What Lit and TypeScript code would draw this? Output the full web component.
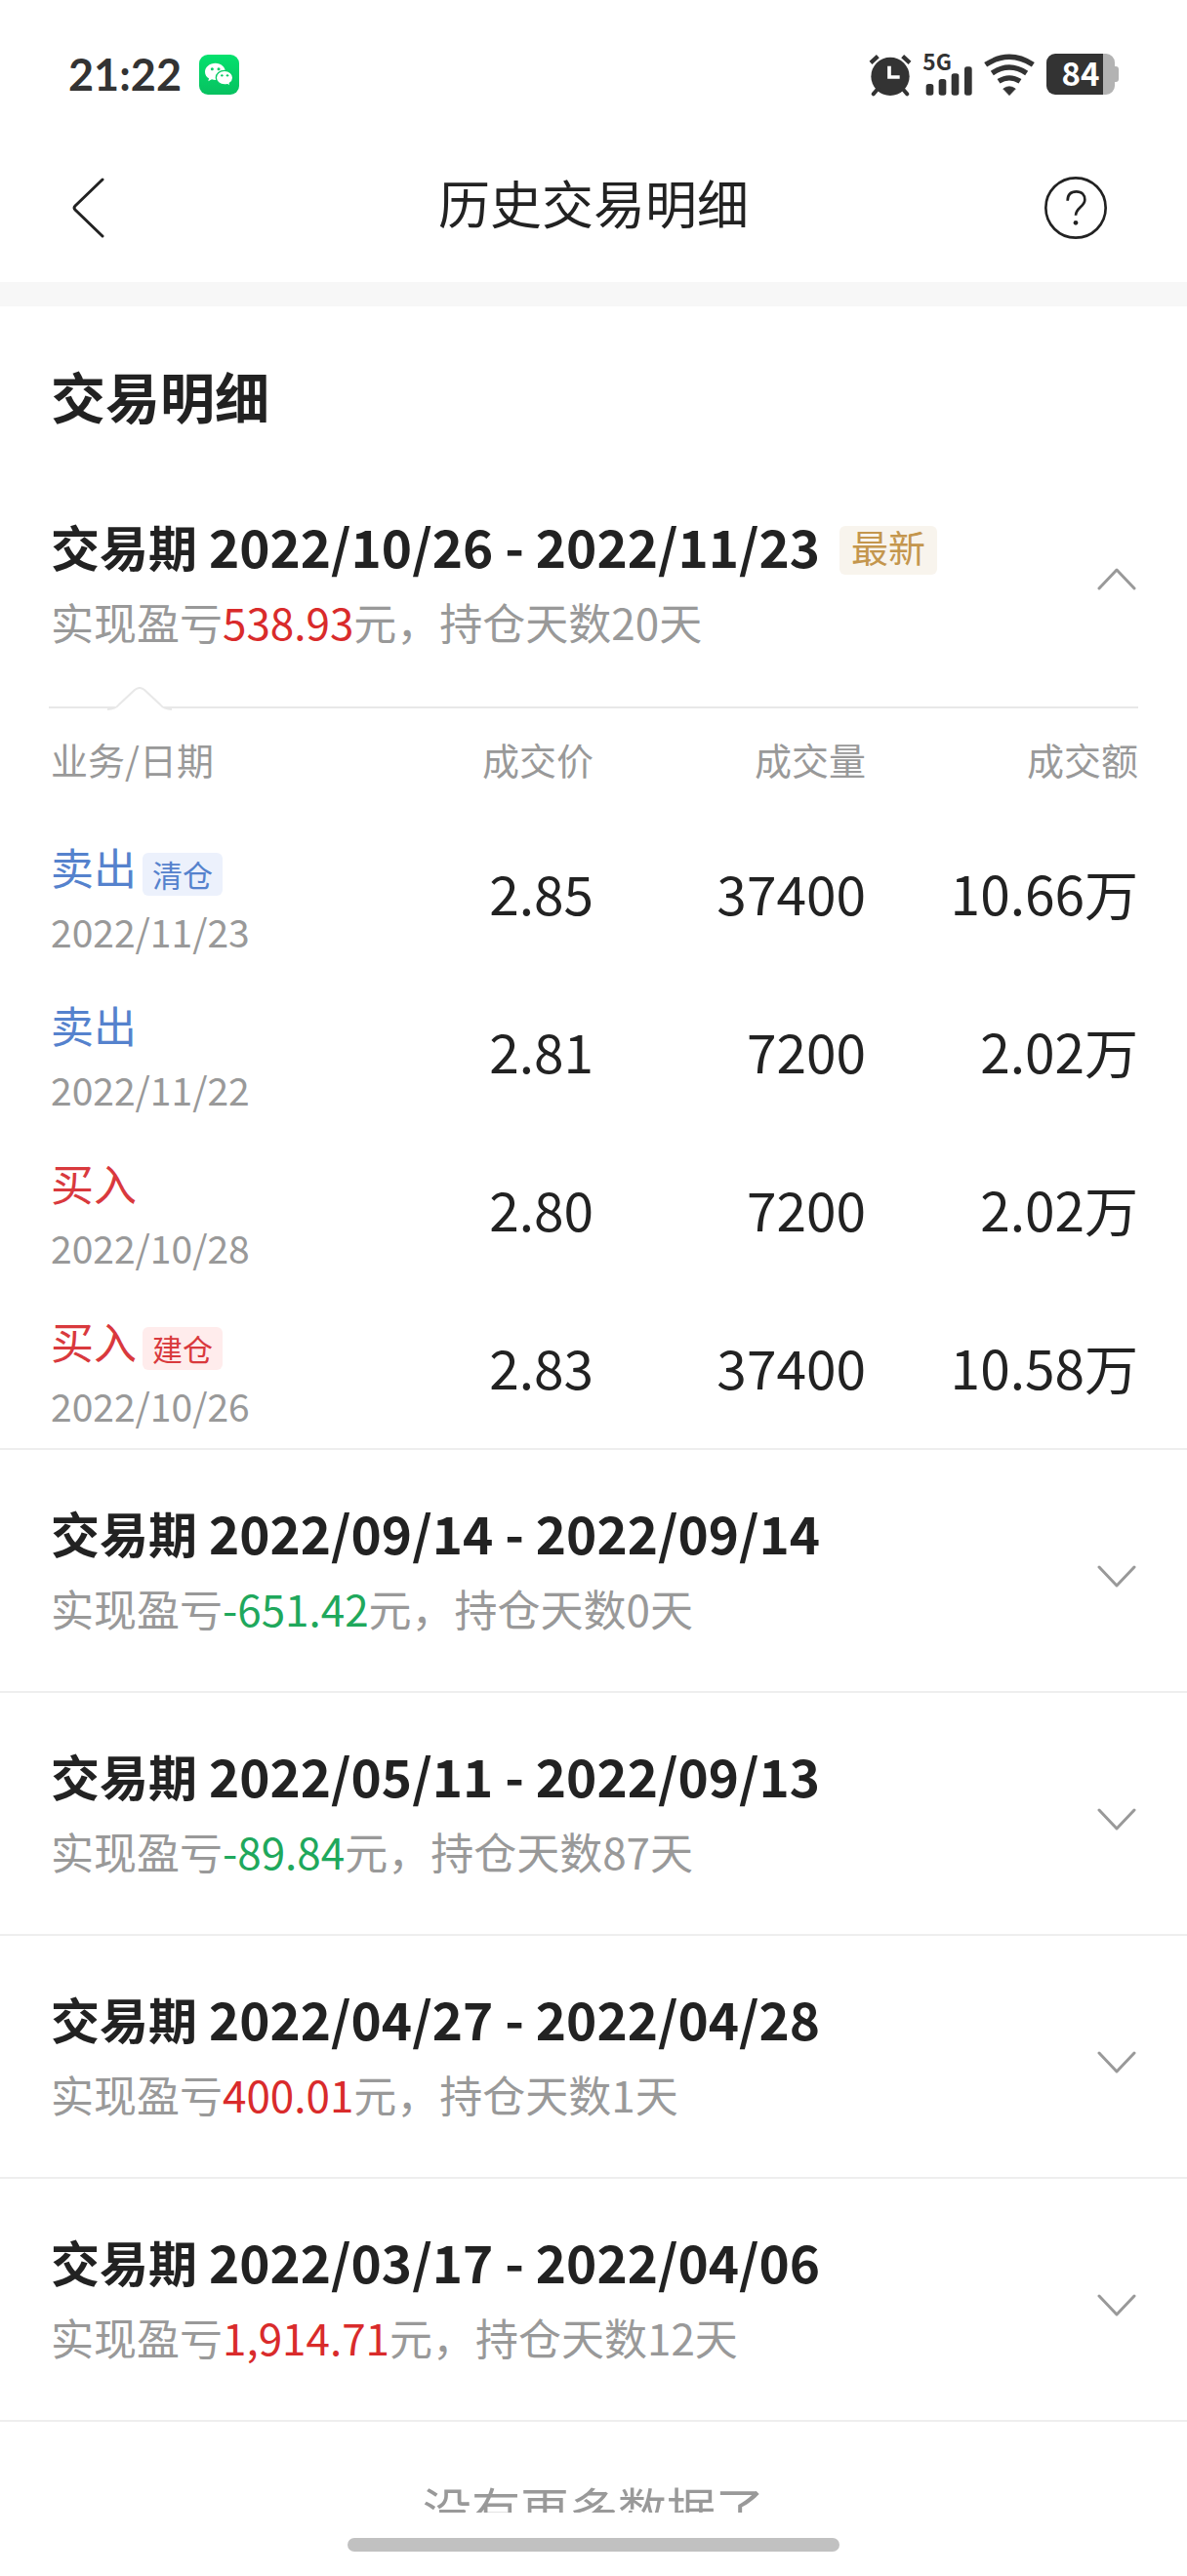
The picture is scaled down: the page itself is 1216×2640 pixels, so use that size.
import { LitElement, html, css, svg, nothing } from "lit";
import { customElement, property, state } from "lit/decorators.js";
import { classMap } from "lit/directives/class-map.js";

interface Trade {
  side: "buy" | "sell";
  tag?: string;
  date: string;
  price: string;
  volume: string;
  amount: string;
}

interface Period {
  range: string;
  profit: string;
  days: number;
  latest?: boolean;
  trades: Trade[];
}

const PERIODS: Period[] = [
  {
    range: "2022/10/26 - 2022/11/23",
    profit: "538.93",
    days: 20,
    latest: true,
    trades: [
      { side: "sell", tag: "清仓", date: "2022/11/23", price: "2.85", volume: "37400", amount: "10.66万" },
      { side: "sell", date: "2022/11/22", price: "2.81", volume: "7200", amount: "2.02万" },
      { side: "buy", date: "2022/10/28", price: "2.80", volume: "7200", amount: "2.02万" },
      { side: "buy", tag: "建仓", date: "2022/10/26", price: "2.83", volume: "37400", amount: "10.58万" },
    ],
  },
  { range: "2022/09/14 - 2022/09/14", profit: "-651.42", days: 0, trades: [] },
  { range: "2022/05/11 - 2022/09/13", profit: "-89.84", days: 87, trades: [] },
  { range: "2022/04/27 - 2022/04/28", profit: "400.01", days: 1, trades: [] },
  { range: "2022/03/17 - 2022/04/06", profit: "1,914.71", days: 12, trades: [] },
];

@customElement("status-bar")
export class StatusBar extends LitElement {
  static styles = css`
    :host {
      display: flex;
      align-items: center;
      justify-content: space-between;
      box-sizing: border-box;
      height: 137px;
      padding: 15px 70px 0;
      color: #333;
    }
    .group {
      display: flex;
      align-items: center;
      gap: 12px;
    }
    .left {
      gap: 18px;
    }
    .time {
      font: 700 45px/56px Lato, "Noto Sans CJK SC", sans-serif;
    }
    svg {
      display: block;
      overflow: visible;
    }
    .network,
    .level {
      font-family: "Noto Sans CJK SC", sans-serif;
      font-weight: 700;
    }
  `;

  render() {
    return html`
      <div class="group left">
        <span class="time">21:22</span>
        <svg width="41" height="41" viewBox="0 0 123 123" role="img" aria-label="微信">
          <defs>
            <linearGradient id="g" x1="0" y1="0" x2="0" y2="1">
              <stop offset="0" stop-color="#04e16d" />
              <stop offset="1" stop-color="#07c160" />
            </linearGradient>
          </defs>
          <rect width="123" height="123" rx="27" fill="url(#g)" />
          <path d="M50 26c-18 0-32 12-32 27 0 9 5 16 12 20l-2 9 11-6c3 1 7 2 11 2 18 0 31-11 31-25S67 26 50 26z" fill="#fff" />
          <circle cx="40" cy="44" r="4.5" fill="#06cf66" />
          <circle cx="60" cy="44" r="4.5" fill="#06cf66" />
          <path d="M78 49c-15 0-26 10-26 22s11 22 26 22c3 0 6 0 9-1l9 4-2-8c6-4 10-10 10-17 0-12-11-22-26-22z" fill="#fff" stroke="#06cb64" stroke-width="4" />
          <circle cx="70" cy="64" r="3.6" fill="#06cb64" />
          <circle cx="87" cy="64" r="3.6" fill="#06cb64" />
        </svg>
      </div>
      <div class="group">
        <svg width="44" height="43" viewBox="0 0 132 129" role="img" aria-label="闹钟">
          <circle cx="66" cy="70" r="59" fill="#333" />
          <path d="M63 38v34h32" fill="none" stroke="#fff" stroke-width="11" />
          <path d="M6 28L28 8M104 8l22 20" stroke="#333" stroke-width="13" />
          <path d="M14 124l14-16M118 124l-14-16" stroke="#333" stroke-width="12" stroke-linecap="round" />
        </svg>
        <svg width="50" height="43" viewBox="0 0 150 129" role="img" aria-label="5G 信号">
          <text class="network" x="-2" y="52" font-size="68" fill="#333">5G</text>
          <rect x="8" y="93" width="23" height="35" rx="8" fill="#333" />
          <rect x="47" y="78" width="23" height="50" rx="8" fill="#333" />
          <rect x="86" y="61" width="23" height="67" rx="8" fill="#333" />
          <rect x="126" y="40" width="23" height="88" rx="8" fill="#333" />
        </svg>
        <svg width="52" height="43" viewBox="0 0 156 129" role="img" aria-label="无线网络">
          <g fill="none" stroke="#333" stroke-width="16">
            <path d="M5 34Q78 -14 151 34" />
            <path d="M25 60Q78 24 131 60" />
            <path d="M45 85Q78 64 111 85" />
          </g>
          <path d="M78 128L59 108Q78 94 97 108z" fill="#333" stroke="#333" stroke-width="2" stroke-linejoin="round" />
        </svg>
        <svg width="74" height="42" viewBox="0 0 74 42" role="img" aria-label="电量 84">
          <path d="M57 0h4a9 9 0 0 1 9 9v4h1a3 3 0 0 1 3 3v10a3 3 0 0 1-3 3h-1v4a9 9 0 0 1-9 9h-4z" fill="#b3b3b3" />
          <path d="M9 0h49v42H9a9 9 0 0 1-9-9V9a9 9 0 0 1 9-9z" fill="#333" />
          <text class="level" x="35" y="33" font-size="33" text-anchor="middle" fill="#fff">84</text>
        </svg>
      </div>
    `;
  }
}

@customElement("trade-table")
export class TradeTable extends LitElement {
  @property({ attribute: false }) trades: Trade[] = [];

  static styles = css`
    :host {
      display: block;
      position: relative;
      margin: 0 50px;
      border-top: 2px solid #e8e8e8;
    }
    .notch {
      position: absolute;
      left: 60px;
      top: -22px;
      display: block;
    }
    table {
      width: 100%;
      table-layout: fixed;
      border-collapse: collapse;
    }
    th,
    td {
      box-sizing: border-box;
      width: 25%;
      padding: 0 0 6px;
      text-align: right;
      vertical-align: middle;
      font-weight: 400;
      white-space: nowrap;
    }
    th {
      height: 110px;
      color: #999;
      font-size: 38px;
      line-height: 56px;
    }
    td {
      height: 162px;
      color: #222;
      font-size: 55px;
      line-height: 72px;
    }
    .kind {
      padding-left: 2px;
      text-align: left;
    }
    td.kind {
      padding-top: 2px;
      padding-bottom: 0;
    }
    .side {
      display: flex;
      align-items: flex-end;
      gap: 6px;
      font-size: 44px;
      line-height: 60px;
    }
    .sell {
      color: #5582cd;
    }
    .buy {
      color: #d9393d;
    }
    .tag {
      padding: 0 10px;
      border-radius: 6px;
      font-size: 31px;
      line-height: 44px;
    }
    .sell .tag {
      background: #ecf1fc;
    }
    .buy .tag {
      background: #ffecec;
    }
    .date {
      display: block;
      margin-top: 11px;
      color: #999;
      font-size: 39px;
      line-height: 50px;
    }
  `;

  render() {
    return html`
      <svg class="notch" width="66" height="24" viewBox="0 0 66 24" aria-hidden="true">
        <path d="M0 23Q8 23 12 18L28 3Q33 -1 38 3L54 18Q58 23 66 23V24H0z" fill="#fff" />
        <path d="M0 23Q8 23 12 18L28 3Q33 -1 38 3L54 18Q58 23 66 23" fill="none" stroke="#e8e8e8" stroke-width="2" />
      </svg>
      <table>
        <thead>
          <tr>
            <th class="kind" scope="col">业务/日期</th>
            <th scope="col">成交价</th>
            <th scope="col">成交量</th>
            <th scope="col">成交额</th>
          </tr>
        </thead>
        <tbody>
          ${this.trades.map(
            (t) => html`
              <tr>
                <td class="kind">
                  <div class="side ${t.side}">
                    <span>${t.side === "sell" ? "卖出" : "买入"}</span>
                    ${t.tag ? html`<span class="tag">${t.tag}</span>` : nothing}
                  </div>
                  <time class="date">${t.date}</time>
                </td>
                <td>${t.price}</td>
                <td>${t.volume}</td>
                <td>${t.amount}</td>
              </tr>
            `
          )}
        </tbody>
      </table>
    `;
  }
}

@customElement("trade-period")
export class TradePeriod extends LitElement {
  @property({ attribute: false }) period!: Period;
  @property({ type: Boolean }) open = false;

  static styles = css`
    :host {
      display: block;
      border-bottom: 2px solid #eee;
    }
    .summary {
      display: flex;
      align-items: center;
      justify-content: space-between;
      box-sizing: border-box;
      width: 100%;
      min-height: 247px;
      margin: 0;
      padding: 0 52px;
      border: 0;
      background: none;
      color: inherit;
      font: inherit;
      text-align: left;
      cursor: pointer;
    }
    .summary.open {
      min-height: 250px;
    }
    .text {
      display: flex;
      flex-direction: column;
      gap: 20px;
      padding-bottom: 4px;
    }
    .title {
      display: flex;
      align-items: flex-end;
      color: #222;
      font-size: 50px;
      font-weight: 700;
      line-height: 60px;
    }
    .range {
      margin-left: 12px;
      font-size: 53px;
    }
    .latest {
      margin-left: 20px;
      padding: 0 12px 8px;
      border-radius: 6px;
      background: #f8f4ed;
      color: #c4964d;
      font-size: 38px;
      font-weight: 400;
      line-height: 42px;
    }
    .result {
      color: #999;
      font-size: 44px;
      line-height: 56px;
    }
    .gain {
      color: #d92b2b;
    }
    .loss {
      color: #1fa85c;
    }
    .arrow {
      flex: none;
    }
    .open .arrow {
      transform: rotate(180deg);
    }
  `;

  private toggle() {
    this.open = !this.open;
  }

  render() {
    const p = this.period;
    const loss = p.profit.startsWith("-");
    return html`
      <button
        type="button"
        class=${classMap({ summary: true, open: this.open })}
        aria-expanded=${this.open ? "true" : "false"}
        @click=${this.toggle}
      >
        <span class="text">
          <span class="title">
            <span>交易期</span>
            <span class="range">${p.range}</span>
            ${p.latest ? html`<span class="latest">最新</span>` : nothing}
          </span>
          <span class="result"
            >实现盈亏<span class=${loss ? "loss" : "gain"}>${p.profit}</span>元，持仓天数${p.days}天</span
          >
        </span>
        <svg class="arrow" width="40" height="40" viewBox="0 0 40 40" aria-hidden="true">
          <path d="M2 16L20 35L38 16" fill="none" stroke="#999" stroke-width="3" stroke-linecap="round" stroke-linejoin="round" />
        </svg>
      </button>
      ${this.open && p.trades.length ? html`<trade-table .trades=${p.trades}></trade-table>` : nothing}
    `;
  }
}

const backIcon = svg`<path d="M31 2L3 29Q1 31 3 33L31 60" fill="none" stroke="#222" stroke-width="3" stroke-linecap="round" stroke-linejoin="round" />`;

const helpIcon = svg`
  <circle cx="96" cy="96" r="92" fill="none" stroke="#222" stroke-width="8" />
  <path d="M71 74C71 56 81 46 98 46S124 57 124 71C124 92 96 96 96 119" fill="none" stroke="#222" stroke-width="8" />
  <circle cx="96" cy="142" r="7" fill="#222" />
`;

@customElement("app-root")
export class AppRoot extends LitElement {
  @state() private periods = PERIODS;

  static styles = css`
    :host {
      display: flex;
      flex-direction: column;
      height: 100vh;
      background: #fff;
      color: #222;
      font-family: "Noto Sans CJK SC", sans-serif;
    }
    .header {
      flex: none;
      display: grid;
      grid-template-columns: 1fr auto 1fr;
      align-items: center;
      height: 152px;
      padding: 0 74px;
    }
    .header h1 {
      margin: 0;
      padding-bottom: 12px;
      font-size: 53px;
      font-weight: 400;
      line-height: 64px;
    }
    .icon {
      justify-self: start;
      padding: 0;
      border: 0;
      background: none;
      cursor: pointer;
    }
    .help {
      justify-self: end;
      margin-right: 8px;
    }
    .icon svg {
      display: block;
    }
    main {
      flex: 1;
      min-height: 0;
      overflow-y: auto;
      scrollbar-width: none;
      border-top: 25px solid #f7f7f7;
    }
    h2 {
      margin: 0;
      padding: 51px 52px 29px;
      font-size: 56px;
      font-weight: 700;
      line-height: 80px;
    }
    .end {
      margin: 0;
      padding: 52px 0;
      color: #999;
      font-size: 50px;
      line-height: 72px;
      text-align: center;
    }
    .home {
      flex: none;
      display: flex;
      justify-content: center;
      padding: 26px 0 25px;
    }
    .handle {
      width: 42%;
      max-width: 504px;
      height: 14px;
      border-radius: 7px;
      background: #c1c1c1;
    }
  `;

  render() {
    return html`
      <status-bar></status-bar>
      <header class="header">
        <button type="button" class="icon" aria-label="返回">
          <svg width="33" height="62" viewBox="0 0 33 62">${backIcon}</svg>
        </button>
        <h1>历史交易明细</h1>
        <button type="button" class="icon help" aria-label="帮助">
          <svg width="64" height="64" viewBox="0 0 192 192">${helpIcon}</svg>
        </button>
      </header>
      <main>
        <h2>交易明细</h2>
        ${this.periods.map(
          (p, i) => html`<trade-period .period=${p} ?open=${i === 0}></trade-period>`
        )}
        <p class="end">没有更多数据了</p>
      </main>
      <footer class="home"><div class="handle"></div></footer>
    `;
  }
}
